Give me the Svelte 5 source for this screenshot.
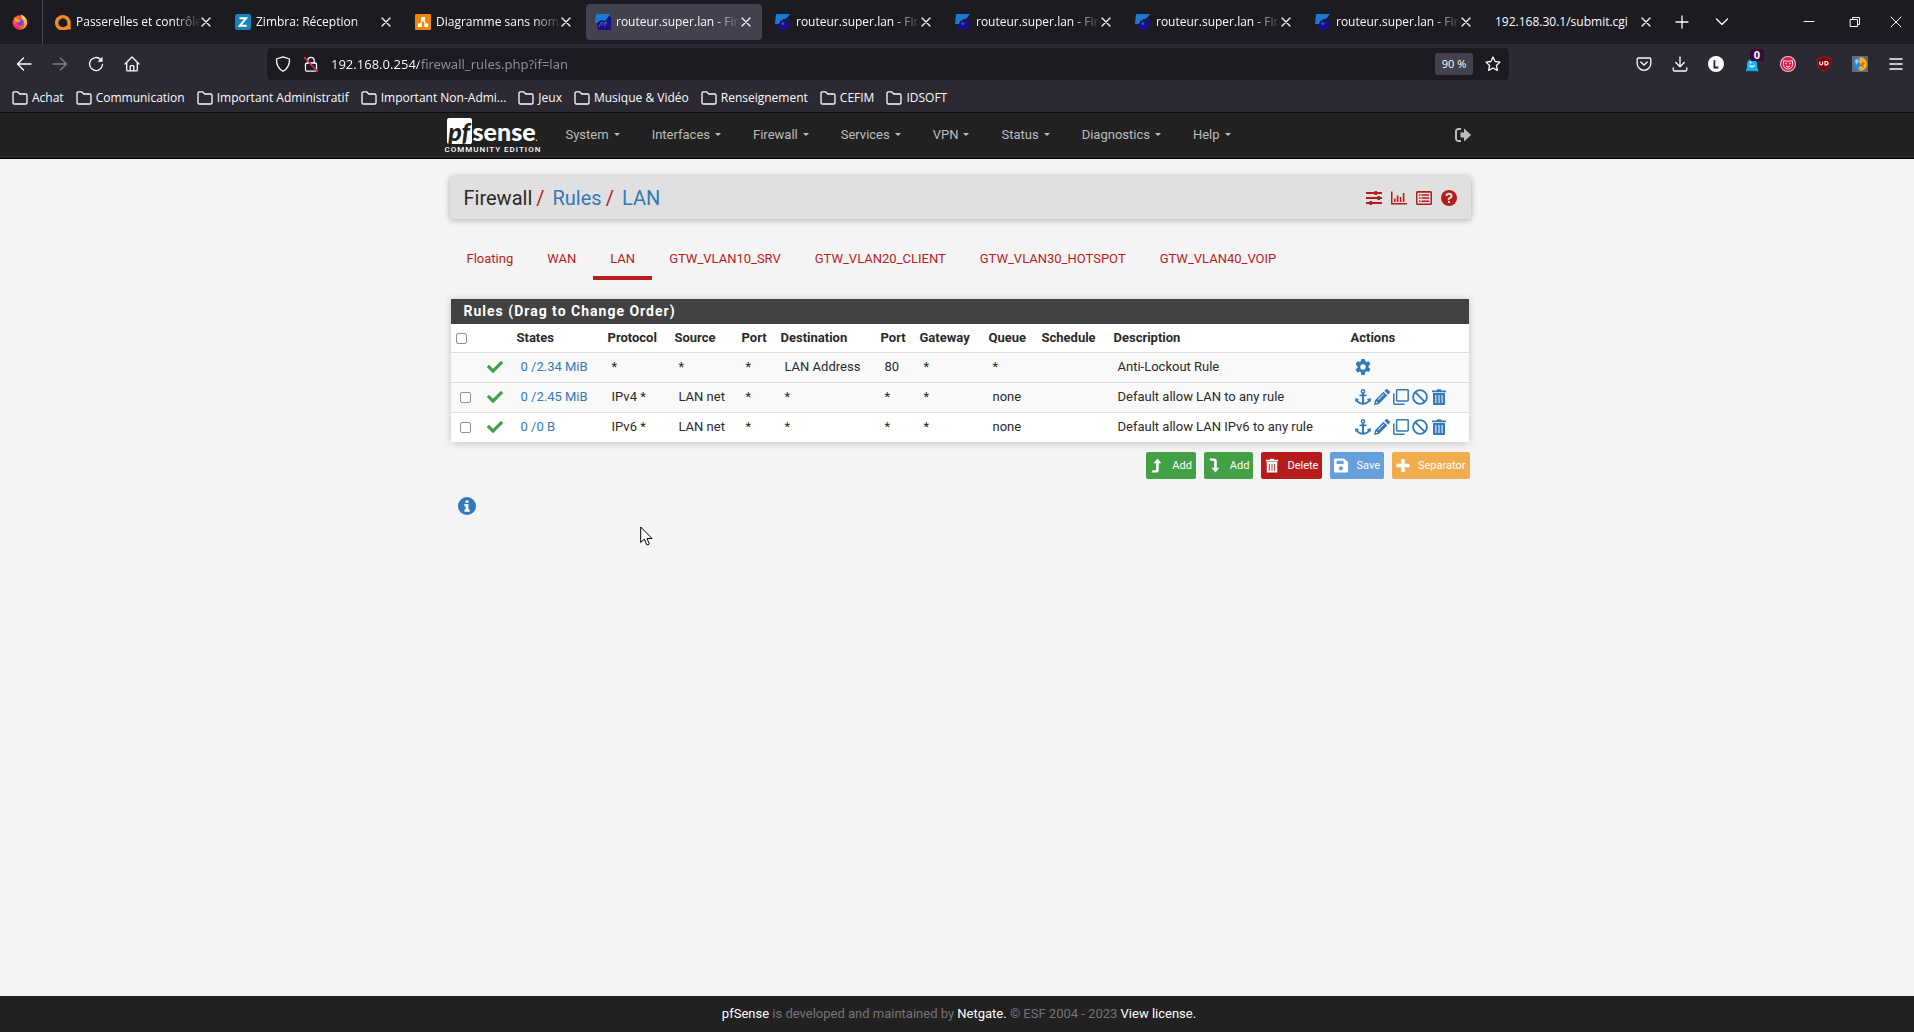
<script>
  const icons = {
    back: { line: true, body: '<path d="M15 8H1.500M7.500 2 1.500 8l6 6"/>' },
    forward: { line: true, body: '<path d="M1 8h13.500M8.500 2l6 6-6 6"/>' },
    reload: { line: true, body: '<path d="M14.500 8.500A6.500 6.500 0 1 1 12.800 3.600"/><path d="M9.500 5.700h5V.7z" fill="currentColor" stroke="none"/>' },
    home: { line: true, body: '<path d="M1 8 8 1l7 7M2.700 6.800v7.100q0 1 1 1h8.600q1 0 1-1V6.800M6.200 14.500v-4q0-.8.8-.8h2q.8 0 .8.800v4"/>' },
    shield: { line: true, body: '<path d="M8 .8 14.500 3q.3 8.500-6.500 12.300Q1.200 11.500 1.500 3z"/>' },
    lock: { line: true, body: '<rect x="2.500" y="7" width="11" height="8.200" rx="1.500"/><path d="M4.800 7V4.500a3.200 3.200 0 0 1 6.400 0V7"/><path d="M1.500 1.500l13 14" stroke="#e22850" stroke-width="1.600"/>' },
    folder: { line: true, body: '<path d="M1 12.700V3.200Q1 1.800 2.400 1.800h3.200L7.800 4h5.900Q15 4 15 5.400v7.300q0 1.300-1.300 1.300H2.300Q1 14 1 12.700z"/>' },
    close: { line: true, body: '<path d="M4 4l8 8M12 4l-8 8"/>' },
    plus: { line: true, body: '<path d="M8 2v12M2 8h12"/>' },
    chevron: { line: true, body: '<path d="M2.500 5 8 10.500 13.500 5"/>' },
    minimise: { line: true, body: '<path d="M3 7.500h10"/>' },
    restore: { line: true, body: '<path d="M3.500 5.500h7v7h-7zM5.500 5.500v-2h7v7h-2"/>' },
    quit: { line: true, body: '<path d="M3 3l10 10M13 3 3 13"/>' },
    star: { line: true, body: '<path d="M8 1l2.100 4.500 4.900.6-3.600 3.400 1 4.900L8 12l-4.400 2.400 1-4.900L1 6.100l4.900-.6z"/>' },
    pocket: { line: true, body: '<path d="M2.500 2h11q1.300 0 1.300 1.300V7.500A6.800 6.800 0 0 1 1.200 7.500V3.300Q1.200 2 2.500 2z"/><path d="M4.800 6 8 9l3.200-3"/>' },
    download: { line: true, body: '<path d="M8 .8v9.700M3.800 6.500 8 10.700l4.200-4.200M1.200 12v1.800q0 1.200 1.200 1.200h11.200q1.200 0 1.200-1.200V12"/>' },
    menu: { line: true, body: '<path d="M2 3h12M2 8h12M2 13h12" stroke-width="1.600"/>' },
    letter: { body: '<circle cx="8" cy="8" r="8" fill="#fbfbfe"/><path d="M6.400 4.200v7.300h4" fill="none" stroke="#2b2a33" stroke-width="1.800"/>' },
    ghost: { body: '<path fill="#16b4f0" d="M3 15.500 2 15l1-4V8a5 5 0 0 1 10 0v3l1.500 4-2 .5-1.500-1-1.500 1-1.500-1-1.500 1-1.500-1z"/><path d="M5.500 9.500q2.500 2.500 5 0" fill="none" stroke="#fff" stroke-width="1.200"/><circle cx="6.500" cy="6.500" r="1" fill="#fff"/>' },
    badger: { body: '<circle cx="8" cy="8" r="8" fill="#f3c3cf"/><circle cx="8" cy="8" r="7" fill="#d9204c"/><path d="M3.500 4.500 6 5.200h4l2.500-.7v4A4.500 4.500 0 0 1 3.500 8.500z" fill="none" stroke="#ffd8e2" stroke-width="1"/><path d="M5.200 7.200 7 8M10.800 7.200 9 8M6 10.200q2 1.800 4 0" stroke="#fff" fill="none"/>' },
    ublock: { body: '<path fill="#800000" stroke="#a33" stroke-width=".6" d="M8 .5q3 2 7 2Q15.500 12 8 15.500.5 12 1 2.500q4 0 7-2z"/><path d="M3.800 5.500v2.300q0 1.200 1.400 1.200t1.400-1.200V5.500M9 5.500V9h1q2 0 2-1.750T10 5.500z" fill="none" stroke="#fff" stroke-width="1.200"/>' },
    globe: { body: '<path fill="#6b6670" d="M0 0h16v16H0z"/><circle cx="8" cy="8" r="7" fill="#2c86dd"/><path fill="#f6b312" d="M8 1a7 7 0 0 1 0 14l-1.500-3L9 9 7 6z"/><path fill="#8ed0ff" d="M3 4l3-1 .5 3L4 9z"/><path fill="#d65f1c" d="M10 6l3 1-2 2 1 3-3-2z"/>' },
    firefox: { body: '<circle cx="8" cy="8.500" r="7.200" fill="#ff5a36"/><path fill="#ffb52b" d="M9.500.5q5.500 3 5.700 8A7.200 7.200 0 0 1 8 15.700q4.500-1.500 4.500-6 0-3-3-4.700z"/><path fill="#ffe14a" d="M9.500.5q3.500 2 4.500 6l-2.200-.8Q9.500 4 9.500.5z"/><path fill="#f0246e" d="M1 6q1.200 6.500 7.500 7.200L8 15.700A7.200 7.200 0 0 1 1 6z"/><circle cx="8" cy="8.300" r="3.500" fill="#7b3fe4"/><path fill="#ff9a30" d="M1.800 3.200q2.700.3 4.700 2 1.800.3 2.700 1.600-2.500.4-2.700 1.700Q3 9 1.800 3.200z"/>' },
    qring: { body: '<path fill="none" stroke="#f08a24" stroke-width="3.400" d="M12.800 12.600A6.200 6.200 0 1 1 14 8v7.500"/>' },
    zimbra: { body: '<rect width="16" height="16" rx="2.500" fill="#1484b8"/><path d="M4.500 4.200h6.600L4.800 11.800h6.900" fill="none" stroke="#fff" stroke-width="2"/>' },
    drawio: { body: '<rect width="16" height="16" rx="1" fill="#f08705"/><path d="M8 5 5 11M8 5l3 6" stroke="#fff" stroke-width="1.400"/><path fill="#fff" d="M6 3h4v3.500H6zM2.800 9.500h4V13h-4zM9.200 9.500h4V13h-4z"/>' },
    pf: { body: '<path fill="#1b79d0" d="M1 0h14l-3 7-2 2H0z"/><path fill="#1b0e86" d="M2 9l4-3 4 1 4-5 2 1v13H3z"/><path d="M4 13 6 8.500h2q1 2-2 3M9.500 13l1.700-5.500M9 9h3" fill="none" stroke="#3f63c4"/>' },
    pf2: { body: '<path fill="#1b79d0" d="M1 0h14l-4 5H8l-2 5H0z"/><path fill="#1b0e86" d="M6 6l3 3 2-5 4 3v6l-4 3H5l-3-3z"/><circle cx="8" cy="9.500" r="1.500" fill="#2c56b8"/>' },
    check: { box: '0 0 512 512', body: '<path d="M173.900 439.400l-166.400-166.400c-10-10-10-26.200 0-36.200l36.200-36.200c10-10 26.200-10 36.200 0L192 312.700 432.100 72.600c10-10 26.200-10 36.200 0l36.200 36.200c10 10 10 26.200 0 36.200l-294.400 294.400c-10 10-26.200 10-36.200 0z"/>' },
    logout: { body: '<path d="M6 2H3.500A2.500 2.500 0 0 0 1 4.500v7A2.500 2.500 0 0 0 3.500 14H6" fill="none" stroke="currentColor" stroke-width="2"/><path d="M5.500 5.500H9V2.200q0-.8.7-.3l5.900 5.600q.5.500 0 1L9.700 14.100q-.7.500-.7-.3v-3.300H5.500z"/>' },
    sliders: { body: '<path d="M0 2.100h16v1.800H0zM0 7.100h16v1.800H0zM0 12.100h16v1.800H0z"/><path d="M8.500 1h2.500v4H8.500zM11.500 6H14v4h-2.500zM3.500 11H6v4H3.500z"/>' },
    chart: { body: '<path d="M0 1.500h1.500V13H16v1.500H0zM3 8.500h1.600V12H3zM5.800 5.500h1.600V12H5.800zM8.800 7h1.600v5H8.800zM11.800 3h1.600v9h-1.600z"/>' },
    list: { body: '<path fill-rule="evenodd" d="M1.500 1h13Q16 1 16 2.500v11q0 1.500-1.500 1.500h-13Q0 15 0 13.500v-11Q0 1 1.500 1zm0 1.800v10.700h13V2.800z"/><path d="M3 4.200h1.500v1.500H3zM3 7.300h1.500v1.500H3zM3 10.400h1.500v1.500H3zM5.500 4.200H13v1.500H5.500zM5.500 7.300H13v1.500H5.500zM5.500 10.400H13v1.500H5.500z"/>' },
    help: { body: '<circle cx="8" cy="8" r="8"/><path d="M5.400 6Q5.600 3.700 8 3.700T10.600 6Q10.600 7.200 8.900 8T8 9.800" fill="none" stroke="#e0e0e0" stroke-width="2"/><path fill="#e0e0e0" d="M7 10.900h2v2H7z"/>' },
    gear: { body: '<path fill-rule="evenodd" d="M6.300 0h3.400l.5 2.300 1.200.7 2.300-.8 1.700 3-1.800 1.600v1.600l1.800 1.600-1.700 3-2.300-.8-1.200.7L9.700 16H6.300l-.5-2.700-1.200-.7-2.300.8-1.700-3 1.800-1.600V7.200L.6 5.200l1.700-3 2.300.8 1.200-.7zM8 5.300a2.700 2.700 0 1 0 0 5.400 2.700 2.700 0 0 0 0-5.400z"/>' },
    anchor: { body: '<circle cx="8" cy="2.400" r="1.600" fill="none" stroke="currentColor" stroke-width="1.500"/><path d="M7 4h2v10.500H7zM4.500 5.600h7v1.700h-7z"/><path d="M1.500 10.500Q3 14.600 8 14.800q5-.2 6.500-4.300" fill="none" stroke="currentColor" stroke-width="2"/><path d="M0 9.200l4.200.8L.5 13.200zM16 9.200l-4.200.8 3.700 3.200z"/>' },
    pencil: { body: '<path fill-rule="evenodd" d="M0 16l1-4.800L9.500 2.700l3.800 3.800L4.800 15zM1.800 14.200l2-.5-1.500-1.500zM4.500 11l5.500-5.500-.6-.6L3.900 10.400z"/><path d="M10.400 1.800 12 .3q.8-.6 1.500 0l2.200 2.200q.6.800 0 1.500l-1.500 1.600z"/>' },
    clone: { body: '<path d="M4.300.8h10.200q.7 0 .7.700v9.700q0 .7-.7.700H4.300q-.7 0-.7-.7V1.500q0-.7.700-.7zM.8 4.500v10q0 .7.700.7h10" fill="none" stroke="currentColor" stroke-width="1.500"/>' },
    ban: { body: '<circle cx="8" cy="8" r="6.900" fill="none" stroke="currentColor" stroke-width="1.900"/><path d="M3.200 3.200l9.600 9.600" stroke="currentColor" stroke-width="1.900"/>' },
    trash: { body: '<path fill-rule="evenodd" d="M1 1.500h4.500L6.200.3h3.600l.7 1.200H15v1.800H1zM2 4h12v11q0 1-1 1H3q-1 0-1-1zM4.400 6v8h1V6zM7.500 6v8h1V6zM10.600 6v8h1V6z"/>' },
    up: { body: '<path d="M8.500 0l4.500 5.500H10V13q0 3-3 3H1.500L3 13.500h3q1 0 1-1v-7H4z"/>' },
    down: { body: '<path d="M8.500 16 13 10.500H10V3q0-3-3-3H1.500L3 2.500h3q1 0 1 1v7H4z"/>' },
    save: { body: '<path fill-rule="evenodd" d="M1.500 0h10L16 4v10.500q0 1.500-1.500 1.500h-13Q0 16 0 14.500v-13Q0 0 1.500 0zM3 2.500v3.700h8V2.500zM8 8.800a2.400 2.400 0 1 0 0 4.800 2.400 2.400 0 0 0 0-4.800z"/>' },
    add: { body: '<path d="M6 .5h4V6h5.500v4H10v5.500H6V10H.5V6H6z"/>' },
    info: { body: '<circle cx="8" cy="8" r="8"/><path fill="#fff" d="M6.700 3h2.600v2.200H6.700zM5.700 6.300h3.600v4.800h1V13H5.700v-1.900h1V8.200h-1z"/>' }
  };

  const tabs = [
    { icon: 'qring', title: 'Passerelles et contrôleu' },
    { icon: 'zimbra', title: 'Zimbra: Réception' },
    { icon: 'drawio', title: 'Diagramme sans nom.' },
    { icon: 'pf', title: 'routeur.super.lan - Fire', active: true },
    { icon: 'pf2', title: 'routeur.super.lan - Fire' },
    { icon: 'pf2', title: 'routeur.super.lan - Fire' },
    { icon: 'pf2', title: 'routeur.super.lan - Fire' },
    { icon: 'pf2', title: 'routeur.super.lan - Fire' },
    { title: '192.168.30.1/submit.cgi' }
  ];
  const bookmarks = ['Achat', 'Communication', 'Important Administratif', 'Important Non-Admi...', 'Jeux', 'Musique & Vidéo', 'Renseignement', 'CEFIM', 'IDSOFT'];
  const menus = ['System', 'Interfaces', 'Firewall', 'Services', 'VPN', 'Status', 'Diagnostics', 'Help'];
  const interfaces = ['Floating', 'WAN', 'LAN', 'GTW_VLAN10_SRV', 'GTW_VLAN20_CLIENT', 'GTW_VLAN30_HOTSPOT', 'GTW_VLAN40_VOIP'];
  const columns = ['States', 'Protocol', 'Source', 'Port', 'Destination', 'Port', 'Gateway', 'Queue', 'Schedule', 'Description', 'Actions'];
  const rules = [
    { cells: ['*', '*', '*', 'LAN Address', '80', '*', '*', '', 'Anti-Lockout Rule'], states: '0 /2.34 MiB', fixed: true },
    { cells: ['IPv4 *', 'LAN net', '*', '*', '*', '*', 'none', '', 'Default allow LAN to any rule'], states: '0 /2.45 MiB' },
    { cells: ['IPv6 *', 'LAN net', '*', '*', '*', '*', 'none', '', 'Default allow LAN IPv6 to any rule'], states: '0 /0 B', open: true }
  ];
  const actions = ['anchor', 'pencil', 'clone', 'ban', 'trash'];
  const buttons = [
    { icon: 'up', text: 'Add', kind: 'success' },
    { icon: 'down', text: 'Add', kind: 'success' },
    { icon: 'trash', text: 'Delete', kind: 'danger' },
    { icon: 'save', text: 'Save', kind: 'primary' },
    { icon: 'add', text: 'Separator', kind: 'warning' }
  ];
</script>

{#snippet icon(name)}
  <svg class="icon" class:line={icons[name].line} viewBox={icons[name].box ?? '0 0 16 16'} aria-hidden="true">{@html icons[name].body}</svg>
{/snippet}

<div class="window">
  <header class="browser">
    <div class="tabbar">
      <div class="pinned">{@render icon('firefox')}</div>
      <div class="tabs">
        {#each tabs as tab}
          <div class="tab" class:active={tab.active}>
            <button class="tab-title">
              {#if tab.icon}{@render icon(tab.icon)}{/if}
              <span>{tab.title}</span>
            </button>
            <button class="tab-close" aria-label="Fermer">{@render icon('close')}</button>
          </div>
        {/each}
      </div>
      <button class="tool" aria-label="Nouvel onglet">{@render icon('plus')}</button>
      <button class="tool" aria-label="Liste des onglets">{@render icon('chevron')}</button>
      <div class="controls">
        <button aria-label="Réduire">{@render icon('minimise')}</button>
        <button aria-label="Restaurer">{@render icon('restore')}</button>
        <button aria-label="Quitter">{@render icon('quit')}</button>
      </div>
    </div>

    <div class="toolbar">
      <div class="history">
        <button class="tool" aria-label="Précédent">{@render icon('back')}</button>
        <button class="tool" aria-label="Suivant" disabled>{@render icon('forward')}</button>
        <button class="tool" aria-label="Actualiser">{@render icon('reload')}</button>
        <button class="tool" aria-label="Accueil">{@render icon('home')}</button>
      </div>
      <div class="urlbar">
        {@render icon('shield')}
        {@render icon('lock')}
        <input type="text" aria-label="Adresse" value="192.168.0.254/firewall_rules.php?if=lan" />
        <button class="zoom">90 %</button>
        <button class="star" aria-label="Marquer cette page">{@render icon('star')}</button>
      </div>
      <div class="extensions">
        <button class="tool" aria-label="Pocket">{@render icon('pocket')}</button>
        <button class="tool" aria-label="Téléchargements">{@render icon('download')}</button>
        <button class="tool" aria-label="Compte">{@render icon('letter')}</button>
        <button class="tool" aria-label="Ghostery">{@render icon('ghost')}<span class="badge">0</span></button>
        <button class="tool" aria-label="Badger">{@render icon('badger')}</button>
        <button class="tool" aria-label="uBlock">{@render icon('ublock')}</button>
        <button class="tool" aria-label="Extension">{@render icon('globe')}</button>
        <button class="tool" aria-label="Menu">{@render icon('menu')}</button>
      </div>
    </div>

    <nav class="bookmarks">
      {#each bookmarks as mark}
        <a href="#bookmark">{@render icon('folder')}<span>{mark}</span></a>
      {/each}
    </nav>
  </header>

  <div class="page">
    <nav class="navbar">
      <div class="container">
        <a class="brand" href="#home">
          <span class="wordmark"><b class="pf">pf</b><b>sense</b><i>.</i></span>
          <span class="edition">COMMUNITY EDITION</span>
        </a>
        <ul>
          {#each menus as menu}
            <li><a href="#menu">{menu}<span class="caret"></span></a></li>
          {/each}
        </ul>
        <a class="logout" href="#logout" aria-label="Logout">{@render icon('logout')}</a>
      </div>
    </nav>

    <main class="container">
      <div class="heading">
        <ol>
          <li>Firewall</li>
          <li><a href="#rules">Rules</a></li>
          <li><a href="#lan">LAN</a></li>
        </ol>
        <div class="shortcuts">
          {#each ['sliders', 'chart', 'list', 'help'] as name}
            <a href="#{name}" aria-label={name}>{@render icon(name)}</a>
          {/each}
        </div>
      </div>

      <ul class="interfaces">
        {#each interfaces as name}
          <li class:active={name === 'LAN'}><a href="#interface">{name}</a></li>
        {/each}
      </ul>

      <section class="panel">
        <h2>Rules (Drag to Change Order)</h2>
        <table>
          <colgroup>
            <col class="w-tick" /><col class="w-status" /><col class="w-states" /><col class="w-mid" /><col class="w-mid" />
            <col class="w-port" /><col class="w-dest" /><col class="w-port" /><col class="w-gate" /><col class="w-queue" />
            <col class="w-sched" /><col /><col class="w-actions" />
          </colgroup>
          <thead>
            <tr>
              <th><input type="checkbox" aria-label="Select all" /></th>
              <th></th>
              {#each columns as column}<th>{column}</th>{/each}
            </tr>
          </thead>
          <tbody>
            {#each rules as rule}
              <tr class:open={rule.open}>
                <td>{#if !rule.fixed}<input type="checkbox" aria-label="Select rule" />{/if}</td>
                <td class="status">{@render icon('check')}</td>
                <td><a href="#states">{rule.states}</a></td>
                {#each rule.cells as cell}<td>{cell}</td>{/each}
                <td>
                  <div class="actions">
                    {#each rule.fixed ? ['gear'] : actions as name}
                      <a href="#{name}" aria-label={name}>{@render icon(name)}</a>
                    {/each}
                  </div>
                </td>
              </tr>
            {/each}
          </tbody>
        </table>
      </section>

      <div class="buttons">
        {#each buttons as button}
          <button class={button.kind}>{@render icon(button.icon)}<span>{button.text}</span></button>
        {/each}
      </div>

      <button class="info" aria-label="Information">{@render icon('info')}</button>
    </main>

    <footer>
      <p><a href="#pfsense">pfSense</a> is developed and maintained by <a href="#netgate">Netgate.</a> © ESF 2004 - 2023 <a href="#license">View license.</a></p>
    </footer>
  </div>

  <svg class="pointer" viewBox="0 0 13 20" aria-hidden="true"><path d="M.7 1v15.500l3.600-3.400 2.400 5.600q1.500.8 2.600-.8L7 12.500h5z" fill="#fff" stroke="#000" /></svg>
</div>

<style>
  :global(body) {
    background: #f4f4f4;
  }
  .window {
    position: relative;
    display: flex;
    flex-direction: column;
    min-height: 100vh;
    font-family: Roboto, sans-serif;
    font-size: 13px;
    line-height: 18px;
    color: #2a2a2a;
  }
  .window * {
    box-sizing: border-box;
  }
  button {
    display: flex;
    align-items: center;
    justify-content: center;
    padding: 0;
    border: 0;
    background: none;
    color: inherit;
    font: inherit;
  }
  a {
    color: #337ab7;
    text-decoration: none;
  }
  ul,
  ol {
    display: flex;
    margin: 0;
    padding: 0;
    list-style: none;
  }
  .icon {
    display: block;
    flex: none;
    width: 16px;
    height: 16px;
    fill: currentColor;
  }
  .line {
    fill: none;
    stroke: currentColor;
    stroke-width: 1.3;
    stroke-linecap: round;
    stroke-linejoin: round;
  }

  .browser {
    background: #2b2a33;
    border-bottom: 1px solid #0c0c0d;
    color: #fbfbfe;
    font-family: "Open Sans", sans-serif;
    font-size: 12px;
  }
  .tabbar {
    display: flex;
    align-items: center;
    height: 44px;
    background: #1c1b22;
  }
  .pinned {
    display: flex;
    flex: none;
    align-items: center;
    justify-content: center;
    width: 43px;
    height: 44px;
    padding-right: 3px;
    border-right: 1px solid #4a4953;
  }
  .tabs {
    display: flex;
    flex: 0 1 1619px;
    gap: 4px;
    min-width: 0;
    padding-left: 3px;
  }
  .tab {
    display: flex;
    flex: 1;
    align-items: center;
    min-width: 0;
    height: 36px;
    padding: 0 8px 0 9px;
    border-radius: 4px;
  }
  .tab.active {
    background: #42414d;
  }
  .tab-title {
    flex: 1;
    justify-content: flex-start;
    gap: 5px;
    min-width: 0;
    margin-right: -4px;
    overflow: hidden;
    white-space: nowrap;
    mask-image: linear-gradient(90deg, #000 80%, transparent);
  }
  .tab:last-child .tab-title {
    mask-image: none;
  }
  .tab-close {
    flex: none;
  }
  .tool {
    position: relative;
    flex: none;
    width: 36px;
    height: 32px;
  }
  .tool:disabled {
    opacity: 0.4;
  }
  .tabbar .tool {
    width: 40px;
  }
  .controls {
    display: flex;
    margin-left: auto;
  }
  .controls button {
    width: 46px;
    height: 32px;
  }
  .controls .line {
    stroke-width: 1;
  }
  .controls button:last-child {
    width: 36px;
  }
  .toolbar {
    display: flex;
    align-items: center;
    height: 36px;
    padding: 4px 0 0 6px;
  }
  .history {
    display: flex;
    width: 261px;
  }
  .urlbar {
    display: flex;
    flex: 1;
    align-items: center;
    height: 32px;
    padding: 0 8px;
    gap: 12px;
    border-radius: 4px;
    background: #1c1b22;
  }
  .urlbar input {
    flex: 1;
    min-width: 0;
    padding: 0;
    border: 0;
    outline: 0;
    background: linear-gradient(90deg, #fbfbfe 88px, #8f8f9d 88px) text;
    color: transparent;
    font: 13px/20px "Noto Sans", sans-serif;
  }
  .zoom {
    width: 38px;
    height: 22px;
    border-radius: 3px;
    background: #42414d;
    font-size: 11px;
  }
  .extensions {
    display: flex;
    padding-left: 117px;
  }
  .badge {
    position: absolute;
    top: 1px;
    right: 6px;
    width: 14px;
    height: 12px;
    border-radius: 2px;
    background: #380a3c;
    font: bold 11px/12px "Noto Sans", sans-serif;
    text-align: center;
  }
  .bookmarks {
    display: flex;
    align-items: center;
    gap: 12px;
    height: 32px;
    padding: 4px 0 0 12px;
  }
  .bookmarks a {
    display: flex;
    align-items: center;
    gap: 4px;
    color: inherit;
    white-space: nowrap;
  }

  .page {
    display: flex;
    flex: 1;
    flex-direction: column;
    background: #f4f4f4;
  }
  .container {
    width: 1021px;
    max-width: 100%;
    margin: 0 auto;
    translate: 3px;
  }
  .navbar {
    background: #212121;
    border-bottom: 1px solid #000;
  }
  .navbar .container {
    display: flex;
    align-items: center;
    height: 45px;
    padding-bottom: 2px;
  }
  .brand {
    display: flex;
    flex-direction: column;
    justify-content: flex-end;
    width: 100px;
    height: 43px;
    margin-left: -5px;
    color: #fff;
  }
  .wordmark {
    display: flex;
    align-items: center;
    height: 26px;
    padding-left: 2px;
    font: 25px/26px Lato, sans-serif;
  }
  .wordmark b {
    font-weight: 900;
  }
  .wordmark i {
    align-self: flex-end;
    font-size: 10px;
    line-height: 14px;
  }
  .wordmark .pf {
    width: 25px;
    height: 26px;
    margin-right: 1px;
    border-radius: 2px;
    background: #fff;
    color: #212121;
    font-style: italic;
    text-align: center;
  }
  .edition {
    font-size: 8px;
    font-weight: 500;
    line-height: 12px;
    letter-spacing: 1px;
    white-space: nowrap;
  }
  .navbar ul {
    flex: 1;
    padding-left: 5px;
  }
  .navbar li a {
    display: flex;
    align-items: center;
    gap: 5px;
    padding: 0 16px;
    color: #bdbdbd;
  }
  .caret {
    border: 3px solid transparent;
    border-top: 3px solid #bdbdbd;
    border-bottom: 0;
  }
  .logout {
    color: #bdbdbd;
  }
  .heading {
    display: flex;
    align-items: center;
    justify-content: space-between;
    height: 43px;
    margin-top: 17px;
    padding: 0 14px;
    border-radius: 4px;
    background: #e0e0e0;
    box-shadow: 0 1px 6px #0000004d;
  }
  .heading ol {
    font-size: 20px;
    line-height: 28px;
  }
  .heading li + li::before {
    content: "/";
    padding: 0 8px 0 4px;
    color: #b71c1c;
  }
  .shortcuts {
    display: flex;
    gap: 9px;
  }
  .shortcuts a {
    color: #b71c1c;
  }
  .interfaces {
    margin-top: 22px;
  }
  .interfaces a {
    display: block;
    height: 39px;
    padding: 9px 17px 0;
    border-bottom: 4px solid transparent;
    color: #b71c1c;
  }
  .interfaces .active a {
    border-bottom-color: #b71c1c;
  }
  .panel {
    margin: 19px 2px 0 1px;
    background: #fff;
    box-shadow: 0 1px 8px #00000033;
  }
  h2 {
    margin: 0;
    padding: 0 13px;
    background: #424242;
    color: #fff;
    font-size: 14px;
    font-weight: 700;
    line-height: 25px;
    letter-spacing: 1px;
  }
  table {
    width: 100%;
    border-collapse: collapse;
    table-layout: fixed;
  }
  th {
    height: 28px;
    padding: 1px 0 0 5px;
    font-weight: 700;
    text-align: left;
  }
  td {
    height: 30px;
    padding: 0 0 0 9px;
    border-top: 1px solid #ddd;
    background: #f9f9f9;
    white-space: nowrap;
  }
  .open td {
    background: #fff;
  }
  td.status {
    padding-left: 4px;
    color: #43a047;
  }
  input[type="checkbox"] {
    display: block;
    width: 11px;
    height: 11px;
    margin: 0;
    appearance: none;
    border: 1px solid #8f8f9d;
    border-radius: 2px;
    background: #fff;
  }
  .w-tick { width: 32px; }
  .w-status { width: 29px; }
  .w-states { width: 91px; }
  .w-mid { width: 67px; }
  .w-port { width: 39px; }
  .w-dest { width: 100px; }
  .w-gate { width: 69px; }
  .w-queue { width: 53px; }
  .w-sched { width: 72px; }
  .w-actions { width: 123px; }
  .actions {
    display: flex;
    gap: 3px;
  }
  .buttons {
    display: flex;
    justify-content: flex-end;
    gap: 8px;
    margin: 10px 1px 0 0;
  }
  .buttons button {
    gap: 8px;
    height: 27px;
    padding: 0 4px;
    border-radius: 2px;
    color: #fff;
    font-size: 11px;
  }
  .buttons .icon {
    width: 14px;
    height: 15px;
  }
  .success { background: #43a047; }
  .danger { background: #b71c1c; }
  .primary { background: #669fdc; }
  .warning { background: #f0ad4e; }
  .info {
    margin: 18px 0 0 8px;
    color: #337ab7;
  }
  .info .icon {
    width: 18px;
    height: 18px;
  }
  footer {
    margin-top: auto;
    background: #212121;
    color: #757575;
    text-align: center;
  }
  footer p {
    margin: 0;
    padding: 9px 0 9px 4px;
  }
  footer a {
    color: #fff;
  }
  .pointer {
    position: absolute;
    top: 526px;
    left: 640px;
    width: 13px;
    height: 20px;
  }
</style>
